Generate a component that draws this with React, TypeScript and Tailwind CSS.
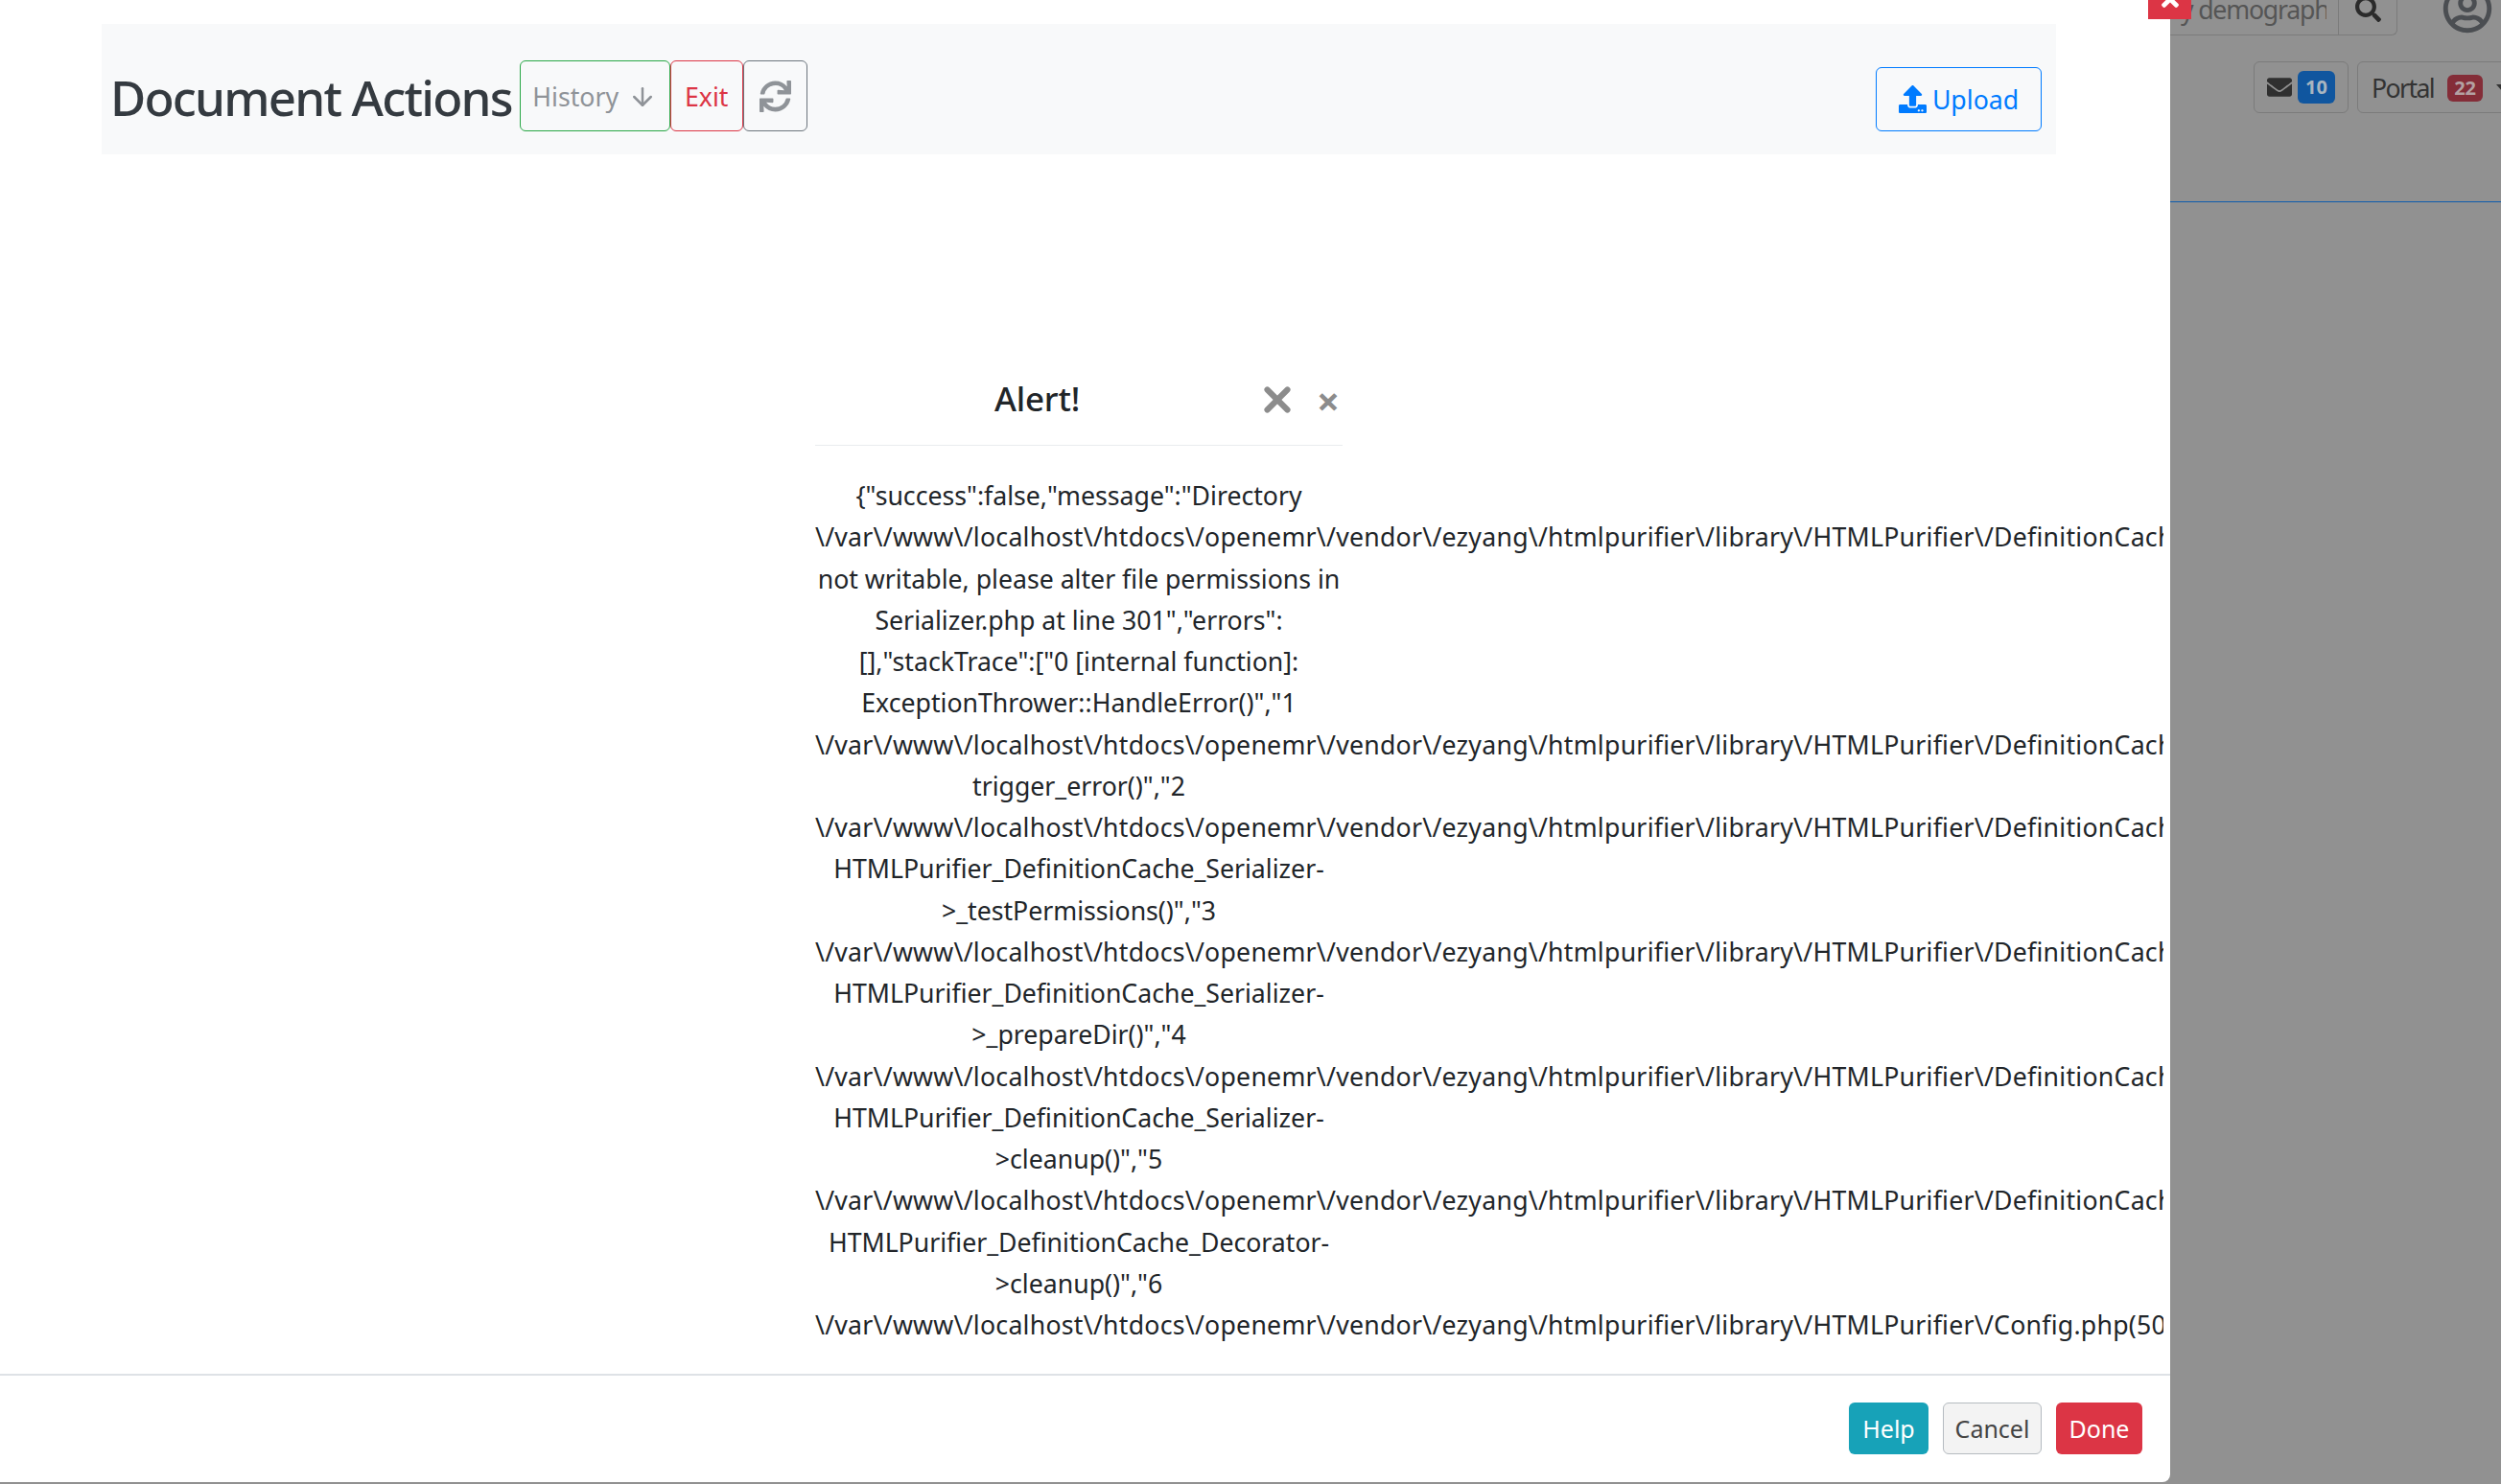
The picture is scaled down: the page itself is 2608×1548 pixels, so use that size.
import React from 'react'
import { ArrowDown, X } from 'lucide-react'
import { FaEnvelope, FaRegUserCircle, FaSearch, FaSync, FaTimes, FaUpload } from 'react-icons/fa'

const lib = String.raw`\/var\/www\/localhost\/htdocs\/openemr\/vendor\/ezyang\/htmlpurifier\/library\/HTMLPurifier\/`
const ser = lib + String.raw`DefinitionCache\/Serializer.php`

const lines = [
  String.raw`{"success":false,"message":"Directory`,
  lib + String.raw`DefinitionCache\/Serializer\/HTML is`,
  'not writable, please alter file permissions in',
  'Serializer.php at line 301","errors":',
  '[],"stackTrace":["0 [internal function]:',
  'ExceptionThrower::HandleError()","1',
  ser + '(301):',
  'trigger_error()","2',
  ser + '(87):',
  'HTMLPurifier_DefinitionCache_Serializer-',
  '>_testPermissions()","3',
  ser + '(120):',
  'HTMLPurifier_DefinitionCache_Serializer-',
  '>_prepareDir()","4',
  ser + '(62):',
  'HTMLPurifier_DefinitionCache_Serializer-',
  '>cleanup()","5',
  lib + String.raw`DefinitionCache\/Decorator.php(62):`,
  'HTMLPurifier_DefinitionCache_Decorator-',
  '>cleanup()","6',
  lib + 'Config.php(503):',
]

export default function App() {
  return (
    <div className="relative flex h-[1548px] w-full overflow-hidden bg-[#919191] font-['Noto_Sans',sans-serif] text-[26.67px] text-[#212529]">
      {/* modal */}
      <div className="flex h-[1546px] w-[2263px] shrink-0 flex-col rounded-br-lg bg-white">
        <div className="mr-[7px] flex-1 overflow-hidden">
          <div className="ml-[106px] mt-[25px] flex h-[136px] w-[2038px] items-start justify-between bg-[#f8f9fa] pl-[9px] pr-[15px]">
            <div className="mt-[38px] flex items-center">
              <h1 className="mr-[8px] mt-[2px] text-[51px] font-medium leading-none tracking-[-1.8px] text-[#343a40]">Document Actions</h1>
              <button className="flex h-[74px] w-[157px] items-center justify-center gap-[10px] rounded-md border border-[#28a745] pt-[2px] text-[#8f9398]">
                History
                <ArrowDown size={30} strokeWidth={2} />
              </button>
              <button className="h-[74px] w-[76px] rounded-md border border-[#dc3545] pt-[2px] text-[#dc3545]">Exit</button>
              <button className="flex h-[74px] w-[67px] items-center justify-center rounded-md border border-[#6c757d] text-[#8f9398]">
                <FaSync size={33} />
              </button>
            </div>
            <button className="mt-[45px] flex h-[67px] w-[173px] items-center justify-center gap-[6px] rounded-md border border-[#007bff] text-[#007bff]">
              <FaUpload size={29} />
              Upload
            </button>
          </div>

          <div className="ml-[850px] w-[550px]">
            <div className="mt-[214px] flex h-[90px] items-center border-b border-[#e9ecef]">
              <div className="mb-[6px] ml-[187px] w-[274px] text-[35px] font-medium tracking-[-0.2px]">Alert!</div>
              <X size={42} strokeWidth={3.5} className="mb-[6px] text-[#8c8c8c]" />
              <span className="mb-[3px] ml-[20px] text-[42px] font-bold leading-none text-[#8c8c8c]">×</span>
            </div>
            <div className="mt-[30px] text-center leading-[43.25px]">
              {lines.map((line, i) => (
                <div key={i} className={line.startsWith('\\/') ? 'whitespace-nowrap tracking-[0.25px]' : 'whitespace-nowrap'}>{line}</div>
              ))}
            </div>
          </div>
        </div>

        <div className="flex h-[113px] items-start justify-end gap-[15px] border-t-2 border-[#dee2e6] pr-[29px] pt-[28px] text-[25px]">
          <button className="h-[54px] w-[83px] rounded-md bg-[#17a2b8] pt-[2px] text-white">Help</button>
          <button className="h-[54px] w-[103px] rounded-md border border-[#b5bbc0] bg-[#f3f3f3] pt-[2px] text-[#444]">Cancel</button>
          <button className="h-[54px] w-[90px] rounded-md bg-[#dc3545] pt-[2px] text-white">Done</button>
        </div>
      </div>

      {/* page behind the modal */}
      <div className="flex-1 overflow-hidden">
        <div className="flex h-[37px] items-end">
          <div className="flex h-[60px] w-[176px] shrink-0 items-end border-b border-r border-[#7b7b7b] pb-[6px] pl-[11px] text-[#555]">
            <span className="w-[152px] overflow-hidden whitespace-nowrap tracking-[-1.2px]">y demographics</span>
          </div>
          <div className="flex h-[60px] w-[61px] shrink-0 items-end justify-center rounded-br-md border-b border-r border-[#7b7b7b] pb-[13px] text-[#2b2b2b]">
            <FaSearch size={27} />
          </div>
          <FaRegUserCircle size={52} className="mb-[2px] ml-[47px] shrink-0 text-[#4b4e52]" />
        </div>
        <div className="ml-[87px] mt-[27px] flex gap-[9px]">
          <div className="flex h-[54px] w-[99px] shrink-0 items-center justify-center gap-[6px] rounded-md border border-[#7b7b7b]">
            <FaEnvelope size={26} className="text-[#2f2f2f]" />
            <span className="rounded-md bg-[#10569f] px-[8px] py-[6px] text-[20px] font-bold leading-[22px] text-[#a9b5c0]">10</span>
          </div>
          <div className="flex h-[54px] w-[160px] shrink-0 items-center gap-[14px] rounded-md border border-[#7b7b7b] pl-[14px] pt-[1px] tracking-[-1.6px] text-[#333]">
            Portal
            <span className="rounded-md bg-[#842d38] px-[7px] py-[3px] text-[20px] font-bold leading-[22px] tracking-normal text-[#b3a1a3]">22</span>
            <span className="h-0 w-0 border-x-[7px] border-t-[8px] border-x-transparent border-t-[#333]" />
          </div>
        </div>
        <div className="mt-[92px] h-[1px] bg-[#0f5cac]" />
      </div>

      {/* close tab on the modal corner */}
      <div className="absolute left-[2240px] top-0 flex h-[20px] w-[45px] items-end justify-center overflow-hidden bg-[#dc3545] text-white">
        <FaTimes size={26} className="mb-[8px]" />
      </div>
    </div>
  )
}
